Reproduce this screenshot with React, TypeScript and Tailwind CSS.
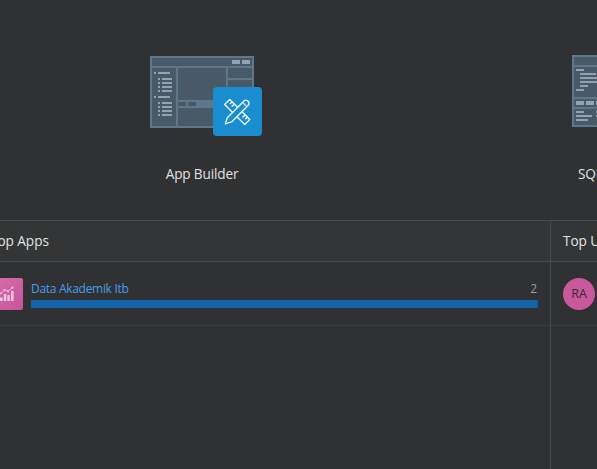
import type { ReactNode } from "react";

type Box = [number, number, number, number];

const Rects = ({ boxes, fill }: { boxes: Box[]; fill: string }) => (
  <g fill={fill}>
    {boxes.map(([x, y, w, h]) => (
      <rect key={`${x}-${y}`} x={x} y={y} width={w} height={h} />
    ))}
  </g>
);

const bullets: Box[] = [16, 40].flatMap((y) => [
  [4, y, 2, 2],
  [8, y, 12, 2],
  ...[6, 10, 14, 18].flatMap((d) => [
    [8, y + d, 2, 2],
    [12, y + d, 10, 2],
  ]),
] as Box[]);

function AppBuilderIcon() {
  return (
    <svg width="112" height="80" viewBox="0 0 112 80" shapeRendering="crispEdges">
      <rect width="104" height="72" fill="#5d788c" />
      <Rects
        fill="#485a68"
        boxes={[
          [2, 2, 100, 8],
          [2, 12, 24, 58],
          [28, 12, 48, 32],
          [78, 12, 24, 10],
          [78, 24, 24, 46],
          [28, 52, 48, 18],
          [28, 46, 8, 4],
          [38, 46, 8, 4],
        ]}
      />
      <Rects fill="#91a4b0" boxes={[[82, 4, 8, 4], [92, 4, 8, 4], ...bullets]} />
      <rect x="63" y="31" width="49" height="49" rx="4" fill="#1a8dd0" shapeRendering="auto" />
      <g
        transform="translate(87.2 56)"
        shapeRendering="auto"
        fill="#1a8dd0"
        stroke="#e9f7ff"
        strokeWidth="1.4"
        strokeLinejoin="round"
        strokeLinecap="round"
      >
        <g transform="rotate(45)">
          <rect x="-14.2" y="-3.6" width="28.4" height="7.2" />
          <path d="M-10.8-3.5V-1.2M-7.6-3.5V-.4M7.6-3.5V-.4M10.8-3.5V-1.2" />
        </g>
        <g transform="rotate(-45)">
          <path d="M-16.8 0-11-3H12.3A3 3 0 0 1 12.3 3H-11Z" />
          <path d="M10.5-3V3" strokeWidth="1.1" />
        </g>
      </g>
    </svg>
  );
}

function SqlWorkshopIcon() {
  return (
    <svg width="104" height="72" viewBox="0 0 104 72" shapeRendering="crispEdges">
      <rect width="104" height="72" fill="#5d788c" />
      <Rects fill="#485a68" boxes={[[2, 2, 100, 8], [2, 12, 100, 30], [2, 44, 100, 8], [2, 54, 100, 16]]} />
      <Rects
        fill="#91a4b0"
        boxes={[
          [4, 14, 8, 2], [8, 18, 16, 2], [8, 22, 20, 2], [8, 26, 18, 2], [8, 30, 8, 2], [4, 34, 8, 2],
          [4, 46, 8, 4], [14, 46, 8, 4], [24, 46, 8, 4],
          [4, 56, 8, 2], [24, 56, 8, 2], [4, 60, 16, 2], [24, 60, 8, 2], [4, 64, 12, 2],
        ]}
      />
    </svg>
  );
}

function ChartIcon() {
  return (
    <svg width="16" height="16" viewBox="0 0 16 16" fill="#f0c3dd">
      <path d="M1 11.5h2.7V15H1zM4.8 8h2.5v7H4.8zM8.3 9h2.5v6H8.3zM12 5h2.6v10H12z" />
      <path d="M1.5 7.5 5.5 4l3.5 1.3L13.5 1.6" fill="none" stroke="#f0c3dd" strokeWidth=".9" />
      <circle cx="1.8" cy="7.3" r="1" />
      <circle cx="5.5" cy="4.1" r="1" />
      <circle cx="9" cy="5.3" r="1" />
      <circle cx="13.5" cy="1.6" r="1.1" />
    </svg>
  );
}

function Header({ className, children }: { className: string; children: ReactNode }) {
  return (
    <h2 className={`flex h-[41px] items-center border-b border-[#48494a] bg-[#343536] pt-px whitespace-nowrap text-[13.6px] tracking-[-0.05px] text-[#e2e2e2] ${className}`}>
      {children}
    </h2>
  );
}

export default function App() {
  return (
    <main className="flex h-[469px] w-[597px] flex-col overflow-hidden bg-[#303133] font-['Open_Sans','Noto_Sans',sans-serif]">
      <nav className="flex h-[220px] shrink-0 text-[13.6px] leading-5 tracking-[-0.15px] text-[#e2e2e2]">
        <a className="flex w-[404px] shrink-0 flex-col items-center pt-14">
          <span className="ml-2 h-20"><AppBuilderIcon /></span>
          <span className="mt-7">App Builder</span>
        </a>
        <a className="ml-[168px] flex w-[104px] shrink-0 flex-col pt-[55px]">
          <SqlWorkshopIcon />
          <span className="mt-[37px] ml-1.5 whitespace-nowrap">SQL Workshop</span>
        </a>
      </nav>
      <div className="flex flex-1 border-t border-[#48494a]">
        <section className="w-[551px] shrink-0 border-r border-[#48494a]">
          <Header className="">
            <span className="-ml-[10px]">Top Apps</span>
          </Header>
          <div className="flex h-16 items-start border-b border-[#3b3c3d] pt-4 pr-3">
            <span className="-ml-[9px] flex size-8 shrink-0 items-center justify-center rounded-xs bg-linear-to-br from-[#d76eac] to-[#c5559a]">
              <ChartIcon />
            </span>
            <div className="ml-2 flex-1">
              <div className="flex h-[22px] items-center justify-between pr-px text-[12px]">
                <a className="tracking-[-0.3px] text-[#479ee8]">Data Akademik Itb</a>
                <span className="text-[#9a9b9b]">2</span>
              </div>
              <div className="h-2 rounded-[1px] bg-[#1264aa]" />
            </div>
          </div>
        </section>
        <section className="w-[550px] shrink-0">
          <Header className="pl-3">Top Users</Header>
          <div className="flex h-16 border-b border-[#3b3c3d] pt-4 pl-3">
            <span className="flex size-8 items-center justify-center rounded-full bg-[#ca589d] text-[12.5px] text-[#3b2633]">RA</span>
          </div>
        </section>
      </div>
    </main>
  );
}
